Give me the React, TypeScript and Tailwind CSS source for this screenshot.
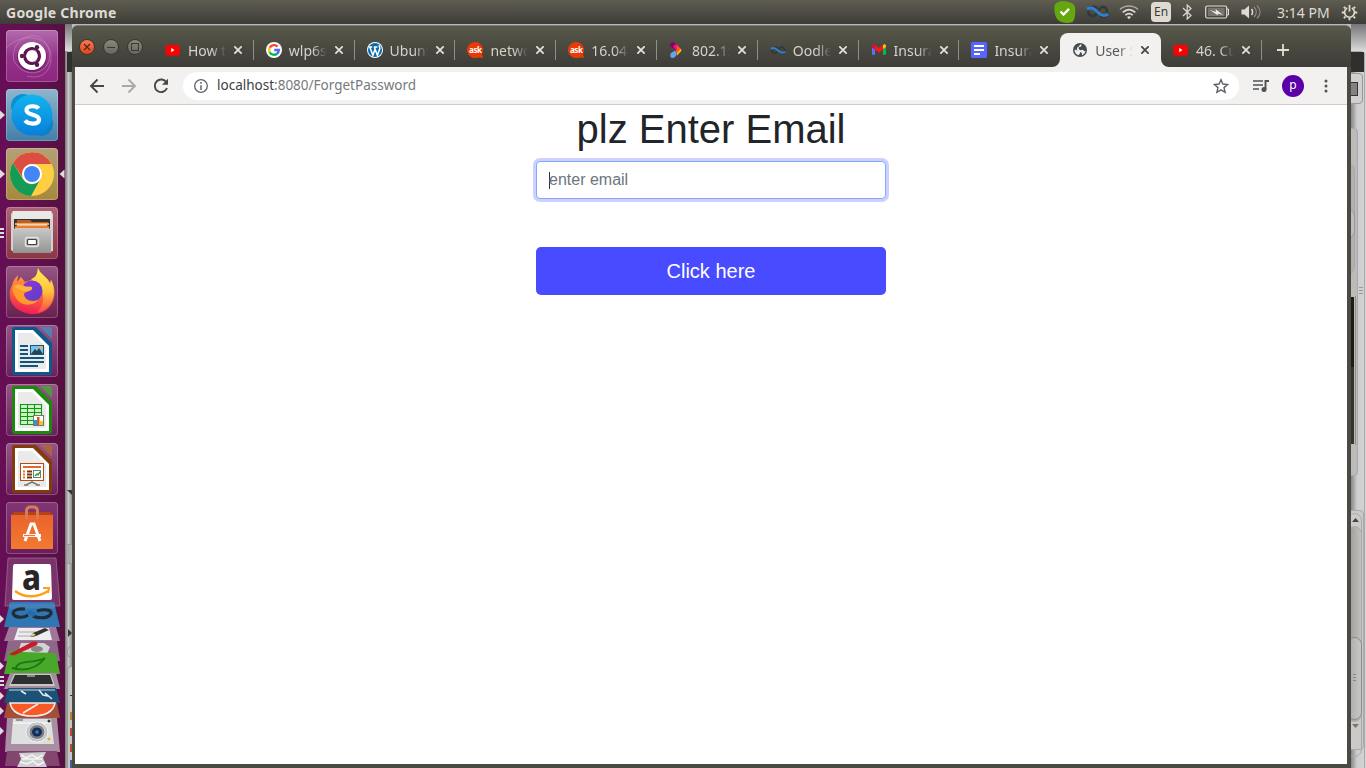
import React from "react";

type TabInfo = { title: string; icon: React.ReactNode; active?: boolean; divider?: boolean };

const YouTube = () => (
  <svg viewBox="0 0 16 16" className="size-4">
    <rect x="0.500" y="3" width="14.200" height="10.400" rx="2" fill="#f00" />
    <path d="M6.200 6v4.200l3.400-2.100z" fill="#fff" />
  </svg>
);
const Google = () => (
  <svg viewBox="0 0 16 16" className="size-4">
    <circle cx="8" cy="8" r="8" fill="#fff" />
    <g fill="none" strokeWidth="2.4">
      <path d="M11.6 4.6A4.9 4.9 0 0 0 3.7 5.8" stroke="#ff4131" />
      <path d="M3.7 5.7a4.9 4.9 0 0 0 0 4.6" stroke="#ffc107" />
      <path d="M3.7 10.2a4.9 4.9 0 0 0 7.4 1.5" stroke="#00c040" />
      <path d="M11 11.7A4.9 4.9 0 0 0 12.9 8H8.2" stroke="#5468ff" />
    </g>
  </svg>
);
const WordPress = () => (
  <svg viewBox="0 0 16 16" className="size-4">
    <circle cx="8" cy="8" r="8" fill="#fff" />
    <circle cx="8" cy="8" r="7" fill="#0a6bab" />
    <path d="M1.8 5h3.4M6.8 5h3.6M2.9 5.3l3 8 2.3-6.6M7.4 5.3l3 8 2.3-6.2c.5-1.6-.6-2.3-.5-3.9" fill="none" stroke="#fff" strokeWidth="1.5" />
  </svg>
);
const Ask = () => (
  <span className="relative flex size-4 items-center justify-center">
    <svg viewBox="0 0 16 16" className="absolute inset-0 size-4">
      <path d="M8 0a8 8 0 1 0 3 15.4l5 .6-1-4.2A8 8 0 0 0 8 0z" fill="#e93a05" />
    </svg>
    <span className="relative text-[8px] leading-none font-bold tracking-[-0.4px] text-white">ask</span>
  </span>
);
const Chevron = () => (
  <svg viewBox="0 0 16 16" className="size-4">
    <path d="M1.500 1.500C3-.5 5 .2 6 1.500l2.500 3.700L6.500 8 5 6.800 1.800 4.500c-.7-1-.8-2-.3-3z" fill="#870067" />
    <path d="M4 4l4-2 2 3 .5 3L8 9.500z" fill="#f51673" />
    <path d="M8 3.500l3.700 3.300c.8.800.8 1.800 0 2.700L8.500 12 6.500 9l1.500-1z" fill="#ff5a22" />
    <path d="M8 11l4-4.300c.5 1 .4 1.800-.3 2.800L8 13.500z" fill="#ffc400" />
    <path d="M2 11l4-2.500L8 12c-1 2-2.500 4-4.500 4-1.700 0-2.500-1.500-2.200-3 .1-1 .3-1.500.7-2z" fill="#68a0f2" />
  </svg>
);
const Oodles = ({ big = false }: { big?: boolean }) => (
  <svg viewBox="0 0 24 14" className={big ? "h-3.5 w-[23px]" : "h-[9px] w-4"} preserveAspectRatio="none">
    <path d="M2 5c0 6 5 7 8 5l4-6c3-4 8-2 8 3s-4 6-7 4M3 4c3-3 7-2 9-1" fill="none" stroke="#34383b" strokeWidth="2.600" />
    <path d="M1 4c5-2 7-1 11 3s7 4.500 11 2" fill="none" stroke="#2f80d0" strokeWidth="3" />
  </svg>
);
const Gmail = () => (
  <svg viewBox="0 0 16 16" className="size-4">
    <path d="M1 4v8.700h3V6z" fill="#5573ff" />
    <path d="M12 6v6.700h3V4z" fill="#00bd45" />
    <path d="M1 3.500c0-1.400 1.600-1.600 2.300-1L8 6l4.700-3.500L13 7 8 10.500 1 5.500z" fill="#ff1320" />
    <path d="M12 3l.7-.6c1-.6 2.300 0 2.300 1.300V5l-3 2z" fill="#ffc107" />
    <path d="M1 3.500c0-.9.500-1.300 1-1.400l2 1.700V7.500L1 5.300z" fill="#c5162e" />
  </svg>
);
const Docs = () => (
  <svg viewBox="0 0 16 16" className="size-4">
    <rect width="16" height="16" rx="1.500" fill="#5765ff" />
    <path d="M3 4h10M3 8h10M3 12h6" stroke="#fff" strokeWidth="1.800" />
  </svg>
);
const Globe = () => (
  <svg viewBox="0 0 16 16" className="size-4">
    <circle cx="8" cy="8" r="7" fill="#45494d" />
    <path d="M2.700 7.500l3.400 1.300 2 1v1.500l-1 1v1C4 12.800 2.300 10 2.700 7.500zM8 2.600h1.500l-.3 2-2.500.7v1.500L8 8.200l3-.5 1.200 1.500 1.300-.5c-.2 2-1.700 3.800-3.400 4.500l-.4-2.500-2-.9-3-2L5.500 5 7 4.500z" fill="#f2f1f0" />
  </svg>
);

const tabs: TabInfo[] = [
  { title: "How t", icon: <YouTube />, divider: true },
  { title: "wlp6s0", icon: <Google />, divider: true },
  { title: "Ubunt", icon: <WordPress />, divider: true },
  { title: "netwo", icon: <Ask />, divider: true },
  { title: "16.04", icon: <Ask />, divider: true },
  { title: "802.1x", icon: <Chevron />, divider: true },
  { title: "Oodles", icon: <Oodles />, divider: true },
  { title: "Insura", icon: <Gmail />, divider: true },
  { title: "Insura", icon: <Docs /> },
  { title: "User S", icon: <Globe />, active: true },
  { title: "46. Cu", icon: <YouTube />, divider: true },
];

function Tab({ title, icon, active, divider }: TabInfo) {
  return (
    <div
      className={
        "relative mt-2 flex h-[34px] w-[100.800px] shrink-0 items-center pl-3 " +
        (active ? "rounded-t-lg bg-[#f2f1f0] text-[#55585b]" : "text-[#d5d3ca]")
      }
    >
      {active && (
        <>
          <svg viewBox="0 0 8 8" className="absolute bottom-0 -left-2 size-2"><path d="M8 0v8H0a8 8 0 0 0 8-8z" fill="#f2f1f0" /></svg>
          <svg viewBox="0 0 8 8" className="absolute -right-2 bottom-0 size-2"><path d="M0 0v8h8a8 8 0 0 1-8-8z" fill="#f2f1f0" /></svg>
        </>
      )}
      {icon}
      <span className="ml-[7px] w-[38px] overflow-hidden text-[14px] whitespace-nowrap [mask-image:linear-gradient(90deg,#000_62%,transparent)]">
        {title}
      </span>
      <svg viewBox="0 0 8 8" className="ml-2 size-2">
        <path d="M.3.3l7.400 7.400M7.700.3L.3 7.700" stroke={active ? "#45484b" : "#e2e0d8"} strokeWidth="1.800" />
      </svg>
      {divider && <span className="absolute top-[7px] right-0 h-5 w-px bg-[#908f88]" />}
    </div>
  );
}

function TopBar() {
  return (
    <header className="flex h-6 shrink-0 items-center bg-linear-to-b from-[#5f5d51] to-[#3d3c38] pl-1.5 text-[#dfdbd2]">
      <span className="text-[14px] font-bold tracking-[0.240px]">Google Chrome</span>
      <div className="ml-auto flex h-6 items-center">
        <svg viewBox="0 0 22 22" className="h-[22px] w-[22px]">
          <path d="M5 .7C8-.3 20 0 21 6c.5 3 .5 12-2 14.500S7 22 4 19 .3 10 .3 7 1.500 1.500 5 .7z" fill="#65a70e" />
          <path d="M6.500 10.500l3 3 5.500-5.600" fill="none" stroke="#fff" strokeWidth="2.300" />
        </svg>
        <span className="ml-2.5 flex"><Oodles big /></span>
        <svg viewBox="0 0 20 16" className="ml-[10px] h-4 w-5" fill="none" strokeWidth="1.600">
          <path d="M1 5.500c5-4.600 13-4.600 18 0" stroke="#aaa79f" /><path d="M3.700 8.400c4-3.500 8.600-3.500 12.600 0" stroke="#dfdbd2" />
          <path d="M6.300 11.200c2.500-2 5-2 7.400 0" stroke="#dfdbd2" /><path d="M8 13l2 2.200 2-2.200c-1-1-3-1-4 0z" fill="#dfdbd2" />
        </svg>
        <span className="ml-3 flex h-5 w-5 items-center justify-center rounded-sm bg-[#dfdbd2] text-[12px] text-[#3c3b37]">En</span>
        <svg viewBox="0 0 10 16" className="ml-[11px] h-4 w-[10px]"><path d="M1 4l8 7.500L5.200 15V1L9 4.500 1 12" fill="none" stroke="#dfdbd2" strokeWidth="1.200" /></svg>
        <svg viewBox="0 0 25 14" className="ml-[13px] h-[14px] w-[25px]">
          <rect x=".7" y="1" width="21" height="12" rx="1.500" fill="none" stroke="#dfdbd2" strokeWidth="1.200" />
          <rect x="3" y="3" width="16.500" height="8" fill="#76746c" />
          <path d="M22 4h1.500v6H22" fill="none" stroke="#dfdbd2" />
          <path d="M5 5l6 2-.5-3L18 10l-5.500-1.500.5 2z" fill="#efede7" />
        </svg>
        <svg viewBox="0 0 20 16" className="ml-[11px] h-4 w-5">
          <path d="M.5 5.500h3l4.500-4v13l-4.500-4h-3z" fill="#dfdbd2" />
          <path d="M10.500 5c1.500 2 1.500 4 0 6" fill="none" stroke="#dfdbd2" strokeWidth="1.500" />
          <path d="M13 3c3 3 3 7 0 10M16 1.500c4 4 4 9 0 13" fill="none" stroke="#8a8880" strokeWidth="1.400" />
        </svg>
        <span className="ml-4 w-[54px] text-[14px] whitespace-nowrap">3:14 PM</span>
        <svg viewBox="0 0 18 18" className="mr-2 ml-[10px] size-[17px]" fill="none" stroke="#dfdbd2">
          <path d="M6.500 4.300a5.200 5.200 0 1 0 5 0" strokeWidth="1.700" />
          <path d="M9 1v7" strokeWidth="1.800" />
          <path d="M3 3l1.700 1.700M15 3l-1.700 1.700M.8 9h2.500M14.700 9h2.500M3 15l1.700-1.700M15 15l-1.700-1.700M9 14.700v2.500" strokeWidth="2" />
        </svg>
      </div>
    </header>
  );
}

const UbuntuIcon = () => (
  <>
    <g fill="none" stroke="#d39aca" strokeOpacity=".45" strokeWidth="1">
      <path d="M8 31C4 14 20 4 30 6s18 18 11 29-25 11-33-4zM0 18C18 0 44 8 45 25S35 50 21 46" />
    </g>
    <circle cx="26" cy="27" r="15" fill="#4a0c40" opacity=".4" />
    <circle cx="26" cy="26" r="14" fill="#fff" />
    <circle cx="26" cy="26" r="7.500" fill="none" stroke="#5e1650" strokeWidth="3.200" />
    <path d="M20 26h-5M29 20.800l2.500-4.300M29 31.200l2.500 4.300" stroke="#fff" strokeWidth="6" />
    <g fill="#5e1650"><circle cx="16" cy="26" r="2.200" /><circle cx="31" cy="17.300" r="2.200" /><circle cx="31" cy="34.700" r="2.200" /></g>
    <circle cx="26" cy="26" r="7.500" fill="none" stroke="#5e1650" strokeWidth="2.600" strokeDasharray="10.700 5" strokeDashoffset="-2.500" />
  </>
);
const SkypeIcon = () => (
  <>
    <circle cx="17" cy="17" r="12" fill="#0b91ce" /><circle cx="35" cy="35" r="12" fill="#0b82c8" />
    <circle cx="26" cy="26" r="20.500" fill="url(#skype)" />
    <path d="M32.500 19.500c-2-3-12-3.500-12 1.700 0 5.800 12.500 3.200 12.500 9.300 0 5.400-10.500 5.200-14 1" fill="none" stroke="#fff" strokeWidth="4.200" />
  </>
);
const ChromeIcon = () => (
  <>
    <circle cx="26" cy="26" r="22" fill="#ffce42" />
    <path d="M7 15a22 22 0 0 1 38.500 1H26a10 10 0 0 0-9 14z" fill="#dc4e42" />
    <path d="M7 15a22 22 0 0 0 18 33l9.500-17a10 10 0 0 1-17.500 0z" fill="#159b58" />
    <circle cx="26" cy="26" r="10" fill="#fff" /><circle cx="26" cy="26" r="8" fill="#4385f4" />
  </>
);
const FilesIcon = () => (
  <>
    <path d="M7 4h38l2 3v37l-3 1V12H8v33l-3-2V7z" fill="#d2d2d0" />
    <path d="M7 4h38l1 8H6z" fill="#e8e8e6" />
    <path d="M8 12h36v12H8z" fill="#37322e" />
    <path d="M11 13h13l2 2h16v8H10z" fill="#b4612a" />
    <path d="M9 16h34v2H9z" fill="#f4a35b" /><path d="M9 19h34v3H9z" fill="#f07a2c" /><path d="M11 18h30" stroke="#fff1dd" strokeWidth="1.200" />
    <path d="M7 22l3-1h32l3 1v24H7z" fill="url(#metal)" />
    <rect x="19.500" y="30.500" width="13" height="9" rx="2" fill="#aaa" stroke="#e2e2e2" strokeWidth="1.500" />
    <rect x="21.500" y="32.500" width="9" height="5" rx="1" fill="#fff" stroke="#444" strokeWidth="1.200" />
  </>
);
const FirefoxIcon = () => (
  <>
    <path d="M12 9l-1 7 4-5 4 5c6-2 9-3 12-6 1-3 0-5 1-8 2 6 10 9 12 16l1-4c4 7 5 16 1 23-5 10-18 14-29 9C4 41 1 29 6 19c1-4 3-7 6-10z" fill="url(#fox)" />
    <path d="M32 2c2 8 11 9 12 16l1-4c4 8 4 18-1 25-3 4-8 7-13 8 8-9 8-20 1-28l-7-6c4-1 7-5 7-11z" fill="url(#flame)" />
    <circle cx="26" cy="25" r="10.500" fill="url(#orb)" />
    <path d="M7 20c4-2 6-2 11 0 4 2 9-1 8 3-2 3-8 2-8 6 2 6 8 7 14 5-4 6-17 7-22-2-3-4-4-8-3-12z" fill="#ff9b2c" />
    <path d="M8 20c4-2 6-2 10 0 4 2 9-1 8 3-4 4-12 2-18-3z" fill="#ffb43e" />
  </>
);
function DocShape({ color, corner, kind }: { color: string; corner: string; kind: string }) {
  return (
    <>
      <path d="M6 4q0-2 2-2h22l16 16v29q0 3-3 3H9q-3 0-3-3z" fill={color} />
      <path d="M34 2h10q2 0 2 2v10z" fill={corner} opacity=".75" />
      <path d="M9 5h18l16 16v26H9z" fill="#fff" /><path d="M12 8h14l14 14v22H12z" fill="#e2e1e1" opacity=".7" />
      {kind === "writer" && <>
        <path d="M14 21h8M14 25h8M14 29h8M14 33h24M14 37h24M14 41h18" stroke="#12567e" strokeWidth="2" />
        <rect x="24.500" y="20.500" width="13" height="9" fill="#75c3ee" stroke="#12567e" /><path d="M25 29l4-5 2 2 2-3 4 6z" fill="#244355" /><circle cx="35" cy="22.500" r="1.600" fill="#f4b63c" />
      </>}
      {kind === "calc" && <>
        <rect x="14" y="20" width="22" height="20" fill="#c9f4c4" />
        <path d="M14 20.500h22M14 24.500h22M14 28.500h22M14 32.500h22M14 36.500h22M14 40.500h22M14.500 20v21M21.500 20v21M28.500 20v21M35.500 20v21" stroke="#159414" strokeWidth="1.100" />
        <rect x="27.500" y="31.500" width="10" height="10" fill="#fff" stroke="#777" /><path d="M28 36h3v5h-3z" fill="#1c9ce4" /><path d="M31 33h2.500v8H31z" fill="#d65c16" /><path d="M34 37h3v4h-3z" fill="#f6c325" />
      </>}
      {kind === "impress" && <>
        <rect x="14.500" y="20.500" width="23" height="17" fill="#fff" stroke="#b54a15" />
        <path d="M17 24h18" stroke="#dc6b31" strokeWidth="2" /><path d="M17 28.500h2M17 31.500h2M17 34.500h2" stroke="#e7732b" strokeWidth="2" /><path d="M21 28.500h5M21 31.500h5M21 34.500h5" stroke="#78310e" strokeWidth="2" />
        <rect x="27.500" y="27.500" width="7" height="7" fill="#fff" stroke="#777" /><path d="M29 33l2-2 1 1 2-3" fill="none" stroke="#24a424" strokeWidth="1.400" />
        <path d="M26 38v2M20 42l6-3 6 3M18 42h4M30 42h4" fill="none" stroke="#777" strokeWidth="1.500" />
      </>}
    </>
  );
}
const SoftwareIcon = () => (
  <>
    <path d="M5 13l3-3h36l3 3z" fill="#b64316" /><path d="M5 13h42v34H5z" fill="url(#bag)" />
    <path d="M20.500 17V9q0-4 4-4h3q4 0 4 4v8" fill="none" stroke="#d97956" strokeWidth="3" />
    <path d="M19 39l6-17h3l6 17M17 33.500h18" fill="none" stroke="#fff" strokeWidth="3" />
    <path d="M18 33.500h11" stroke="#f27532" strokeWidth="1.200" />
  </>
);

const launcher: { icon: React.ReactNode; bg: string; left?: string; right?: boolean }[] = [
  { icon: <UbuntuIcon />, bg: "bg-linear-to-b from-[#b36bad] via-[#94348a] to-[#8d2580]" },
  { icon: <SkypeIcon />, bg: "bg-linear-to-b from-[#8fb5cd] to-[#427fa8]", left: "arrow" },
  { icon: <ChromeIcon />, bg: "bg-linear-to-b from-[#b4a078] to-[#a6893a]", left: "arrow", right: true },
  { icon: <FilesIcon />, bg: "bg-linear-to-b from-[#ad6376] to-[#8c3444]", left: "bars" },
  { icon: <FirefoxIcon />, bg: "bg-linear-to-b from-[#965584] to-[#68214f]" },
  { icon: <DocShape color="#0e598b" corner="#3f92bf" kind="writer" />, bg: "bg-linear-to-b from-[#965584] to-[#6b1d5c]" },
  { icon: <DocShape color="#1b890c" corner="#3fae2f" kind="calc" />, bg: "bg-linear-to-b from-[#965584] to-[#6b1d5c]" },
  { icon: <DocShape color="#843b0c" corner="#b76a35" kind="impress" />, bg: "bg-linear-to-b from-[#965584] to-[#6b1d5c]" },
  { icon: <SoftwareIcon />, bg: "bg-linear-to-b from-[#823673] to-[#6b1d5c]" },
];

function FoldedStack() {
  return (
    <svg viewBox="0 555 65 213" className="block h-[213px] w-[65px] shrink-0">
      <path d="M8 558h48l4 48H5z" fill="#793369" stroke="#a273a0" strokeWidth=".7" />
      <path d="M15 564h34q2 0 2 3l1 31q0 2-2 2H14q-2 0-2-2l1-31q0-3 2-3z" fill="#fff" />
      <text x="22" y="590" fontFamily="Noto Sans" fontWeight="800" fontSize="35" textLength="19" lengthAdjust="spacingAndGlyphs" fill="#292526">a</text>
      <path d="M15 591c9 7 23 7 33 0" fill="none" stroke="#ff9f18" strokeWidth="2.400" /><path d="M43 588h6l-1 5" fill="none" stroke="#ff9f18" strokeWidth="2" />
      <path d="M10 602h44l6 25H4z" fill="#2f76b5" /><path d="M9 606h46" stroke="#6799c2" strokeWidth="5" opacity=".35" />
      <path d="M25 609c-9-1-14 3-11 6s10 3 14 0M33 616c4 2 13 3 17-1s-3-7-13-4" fill="none" stroke="#202c38" strokeWidth="3.200" />
      <path d="M28 612l7 3" stroke="#246aac" strokeWidth="4" />
      <path d="M9 627h47l4 14H4z" fill="#9d7698" /><path d="M18 628h31l3 12H14z" fill="#ededed" /><path d="M19 632h17M18 636h17" stroke="#aaa" />
      <path d="M30 637l3-4 12-5 4 2-13 6z" fill="#333" /><path d="M30 637l3-4 3 2z" fill="#edce73" />
      <path d="M8 641h49l3 20H4z" fill="#8f668a" /><path d="M21 643h23l6 4-3 7-12 4-18-3z" fill="#d3d3d3" /><ellipse cx="37" cy="649" rx="6" ry="3" fill="#888" />
      <path d="M9 652l10-4 3 4 34 1 4 21H4z" fill="#49a829" /><path d="M12 668c15 4 26-1 33-10-10 6-27 1-29 10" fill="none" stroke="#187915" strokeWidth="2" />
      <path d="M11 653l21-11c5-2 8 2 3 4l-20 9c-4 1-7-1-4-2z" fill="#c51c29" />
      <path d="M10 673h46l4 16H4z" fill="#a18d9c" /><path d="M14 674h37l4 12H9z" fill="#cac6c3" /><path d="M15 675h35l3 9H11z" fill="#2d302e" /><path d="M27 676h8" stroke="#ddd" />
      <path d="M8 688h48l4 15H4z" fill="#1c5278" /><path d="M9 690h46" stroke="#7692a5" strokeWidth="2" /><path d="M21 691l5 3M39 690l4 5 5 1-3-3 7 6" fill="none" stroke="#e1ebf1" strokeWidth="1.500" />
      <path d="M7 703h50l3 15H4z" fill="#a54e36" /><path d="M10 703c2 10 11 13 22 13s21-3 23-13z" fill="#f95827" stroke="#eee" strokeWidth="1.500" /><path d="M23 713l15-9" stroke="#eee" strokeWidth="1.600" />
      <path d="M7 718h50l3 34H5z" fill="#a98ea3" /><path d="M13 719h38l3 25H11z" fill="#dedfdf" /><path d="M13 723h38" stroke="#fff" /><path d="M16 720h7" stroke="#555" />
      <ellipse cx="37" cy="732" rx="11" ry="10" fill="#bfc2c6" stroke="#f2f2f2" /><ellipse cx="37" cy="732" rx="8" ry="7.500" fill="#787e85" stroke="#ddd" /><ellipse cx="37" cy="732" rx="5" ry="4.500" fill="#172d53" /><circle cx="37" cy="732" r="1.800" fill="#3a7abb" /><circle cx="49" cy="739" r="1.500" fill="#eba834" /><circle cx="49" cy="721" r="1.500" fill="#333" />
      <path d="M7 751h50l3 15H5z" fill="#83476f" /><path d="M19 753l27-1-3 6 4 9H17l4-8z" fill="#cfd0d0" /><path d="M21 755l5 3 6-3 5 3 6-3M20 762l7 2 6-3 5 4 6-3M22 759h20" fill="none" stroke="#f5f5f5" strokeWidth="1.500" />
      <g fill="#ddd"><path d="M0 615l4 4-4 4zM0 662l4 4-4 4zM0 692l4 4-4 4zM0 707l4 4-4 4zM0 727l4 4-4 4z" /><path d="M0 676h4v2H0zM0 680h4v2H0zM0 684h4v2H0z" /></g>
    </svg>
  );
}

function Launcher() {
  return (
    <nav className="flex w-[65px] shrink-0 flex-col bg-linear-to-r from-[#650e55] via-[#63104f] to-[#54103f] pt-1.5">
      {launcher.map((item, i) => (
        <div key={i} className="flex h-[59px] shrink-0">
          <span className="flex h-[52px] w-1.5 items-center">
            {item.left && (
              <svg viewBox="0 0 6 12" className="h-3 w-1.5">
                {item.left === "arrow" ? <path d="M0 1.500l5 4.500-5 4.500z" fill="#ddd" /> : <path d="M0 2h4M0 6h4M0 10h4" stroke="#ddd" strokeWidth="2" />}
              </svg>
            )}
          </span>
          <span className={"size-[52px] rounded-[4px] shadow-[inset_0_0_0_1px_#ffffff38] " + item.bg}>
            <svg viewBox="0 0 52 52" className="size-[52px]">{item.icon}</svg>
          </span>
          {item.right && <svg viewBox="0 0 6 12" className="mt-5 ml-px h-3 w-1.5"><path d="M5.500 1.500L.5 6l5 4.500z" fill="#ddd" /></svg>}
        </div>
      ))}
      <div className="-mt-1.5 flex"><FoldedStack /></div>
    </nav>
  );
}

function LeftSliver() {
  return (
    <div className="flex w-[7px] shrink-0 flex-col bg-linear-to-r from-[#777] via-[#c9c9c9] to-[#8e8e8e]">
      <div className="h-[27px] bg-linear-to-b from-[#777] to-[#dedede]" />
      <div className="mt-px ml-0.5 h-5 bg-[#30302c]" />
      <svg viewBox="0 0 7 8" className="mt-[416px] h-2 w-[7px]"><path d="M2 2h5v5z" fill="#333" /></svg>
      <div className="mt-12 ml-0.5 h-5 border-y border-[#999] bg-[#aaa]" />
      <svg viewBox="0 0 7 10" className="mt-16 h-2.5 w-[7px]"><path d="M3 1l4 4-4 4z" fill="#333" /></svg>
      <div className="mt-2 ml-0.5 h-3 rounded-l-full border border-[#999]" />
      <div className="mt-2 ml-0.5 grow rounded-tl border-t border-l border-[#999] bg-[#c5c5c5] pt-7">
        <div className="ml-0.5 h-px bg-[#333]" />
        <div className="mt-4 ml-0.5 h-2 w-0.5 bg-[#b98031]" />
        <div className="mt-2 ml-0.5 h-2 w-0.5 bg-[#b84b31]" />
        <div className="mt-2 ml-0.5 h-2 w-0.5 bg-[#b65024]" />
        <div className="mt-2 ml-0.5 h-2 w-0.5 bg-[#405f9a]" />
      </div>
    </div>
  );
}

function RightSliver() {
  return (
    <div className="relative w-[15px] shrink-0 overflow-hidden bg-linear-to-r from-[#888] via-[#cecece] via-40% to-[#d4d4d4]">
      <div className="absolute inset-x-0 top-0 h-7 bg-linear-to-b from-[#77777a] to-[#dedede]" />
      <div className="absolute top-[27px] -left-2 h-[730px] w-[22px] rounded-tr border border-[#aaa]" />
      <div className="absolute top-7 left-0 h-5 w-[13px] bg-[#302f2c]" />
      <div className="absolute top-[49px] -left-3 h-[31px] w-6 rounded border border-[#999] bg-[#d1d0cf]" />
      <div className="absolute top-[58px] -left-2 h-[14px] w-[15px] border border-[#333] bg-[#828282]" />
      <div className="absolute top-[104px] -left-4 h-[348px] w-[23px] rounded border border-[#aaa] bg-[#bcbbb9]" />
      <div className="absolute top-[137px] -left-4 h-[115px] w-5 rounded-xl border border-[#aaa] bg-[#b3b1af]" />
      <div className="absolute top-[184px] -left-4 h-[31px] w-5 rounded-lg border border-[#999] bg-[#bebdbb]" />
      <div className="absolute top-[263px] left-2 h-[7px] w-1 border-y border-[#999]" /><div className="absolute top-[266px] left-2 h-px w-1 bg-[#999]" />
      <div className="absolute top-[273px] left-0 h-[70px] w-[3px] bg-[#1b1b1a]" /><div className="absolute top-[343px] left-0 h-[77px] w-[3px] bg-[#333230]" />
      <div className="absolute top-[272px] left-[3px] h-[149px] w-0.5 border-r border-[#918b84]" />
      <div className="absolute top-[486px] -left-2 h-[240px] w-[21px] rounded border border-[#aaa] bg-[#cbcac9]" />
      <div className="absolute top-[489px] -left-1 h-[244px] w-[15px] rounded-lg border border-[#aaa]" />
      <div className="absolute top-[502px] -left-1 h-[196px] w-[15px] rounded-lg border border-[#aaa] bg-linear-to-r from-[#999] to-[#c1c0be]" />
      <div className="absolute top-[613px] -left-1 h-[83px] w-[15px] rounded-lg border border-[#8d8b89] bg-linear-to-r from-[#aaa] to-[#c8c7c6]" />
      <svg viewBox="0 0 8 4" className="absolute top-[494px] left-px h-1 w-2"><path d="M0 4h7L3.500 0z" fill="#444" /></svg>
      <div className="absolute top-[650px] left-0.5 h-[7px] w-[3px] border-y border-[#888]" /><div className="absolute top-[653px] left-0.5 h-px w-[3px] bg-[#888]" />
      <svg viewBox="0 0 8 4" className="absolute top-[700px] left-px h-1 w-2"><path d="M0 0h7L3.500 4z" fill="#777" /></svg>
    </div>
  );
}

function ChromeWindow() {
  return (
    <main className="mt-px flex w-[1279px] shrink-0 flex-col rounded-t-md border-t border-[#7c7a76] bg-[#4b4b42]">
      <div className="flex h-[41px] shrink-0 rounded-t-md bg-linear-to-b from-[#58584b] to-[#3d3c37] pl-[7px]">
        <div className="flex w-[74px] gap-2 pt-[13px]">
          <span className="flex size-4 items-center justify-center rounded-full border border-[#393831] bg-linear-to-b from-[#f87851] to-[#df4615]"><svg viewBox="0 0 8 8" className="size-2"><path d="M1 1l6 6M7 1L1 7" stroke="#512514" strokeWidth="1.200" /></svg></span>
          <span className="flex size-4 items-center justify-center rounded-full border border-[#393831] bg-linear-to-b from-[#8a897f] to-[#68675f]"><span className="h-px w-2 bg-[#393831]" /></span>
          <span className="flex size-4 items-center justify-center rounded-full border border-[#393831] bg-linear-to-b from-[#8a897f] to-[#68675f]"><span className="size-2 border border-[#393831]" /></span>
        </div>
        <div className="-mt-px flex">{tabs.map((tab, i) => <Tab key={i} {...tab} />)}</div>
        <svg viewBox="0 0 12 12" className="mt-[18px] ml-[15px] size-3"><path d="M6 0v12M0 6h12" stroke="#e1dfd2" strokeWidth="1.800" /></svg>
      </div>
      <div className="mr-1 mb-1 ml-[3px] flex min-h-0 grow flex-col bg-white">
        <div className="flex h-[38px] shrink-0 items-center border-b border-[#cecdca] bg-[#f2f1f0] pl-3.5">
          <svg viewBox="0 0 16 16" className="size-4" fill="none" stroke="#454749" strokeWidth="1.900"><path d="M15 8H2M8.500 1.500L2 8l6.500 6.500" /></svg>
          <svg viewBox="0 0 16 16" className="ml-4 size-4" fill="none" stroke="#aaa9a8" strokeWidth="1.900"><path d="M1 8h13M7.500 1.500L14 8l-6.500 6.500" /></svg>
          <svg viewBox="0 0 16 16" className="ml-4 size-4" fill="none" stroke="#454749" strokeWidth="1.900"><path d="M13.500 4.500A6.300 6.300 0 1 0 14 10" /><path d="M15 .8v6H9z" fill="#454749" stroke="none" /></svg>
          <div className="ml-3.5 flex h-7 w-[1056px] items-center rounded-full bg-white pl-[11px]">
            <svg viewBox="0 0 14 14" className="size-3.5"><circle cx="7" cy="7" r="6.300" fill="none" stroke="#5f6368" strokeWidth="1.300" /><path d="M7 3v1.700M7 6.200v4.800" stroke="#5f6368" strokeWidth="1.500" /></svg>
            <span className="ml-[9px] text-[13.500px] whitespace-nowrap text-[#77797d]"><span className="text-[#3e4144]">localhost</span>:8080/ForgetPassword</span>
            <svg viewBox="0 0 24 24" className="mr-[10px] ml-auto size-4" fill="none" stroke="#5f6368" strokeWidth="2.100"><path d="M12 2.500l2.800 6.600 7.200.6-5.500 4.700 1.700 7.100-6.200-3.800-6.200 3.800 1.700-7.100L2 9.700l7.200-.6z" /></svg>
          </div>
          <svg viewBox="0 0 16 14" className="ml-3.5 h-3.5 w-4"><path d="M0 2h10M0 6h10M0 10h6" stroke="#505254" strokeWidth="1.700" /><path d="M12.500 10V2H16" fill="none" stroke="#505254" strokeWidth="1.900" /><circle cx="11" cy="10.500" r="2.500" fill="#505254" /></svg>
          <span className="ml-[13px] flex size-[22px] items-center justify-center rounded-full bg-[#5b00a7] pb-0.5 text-[12px] text-white">p</span>
          <svg viewBox="0 0 4 14" className="ml-5 h-3.5 w-1" fill="#505254"><circle cx="2" cy="2" r="1.500" /><circle cx="2" cy="7" r="1.500" /><circle cx="2" cy="12" r="1.500" /></svg>
        </div>
        <form className="mx-auto flex w-[350px] flex-col font-['Liberation_Sans',sans-serif]">
          <h1 className="text-center text-[40px] leading-12 font-normal text-[#212529]">plz Enter Email</h1>
          <div className="mt-2 flex h-[38px] items-center rounded border border-[#80aaff] bg-white pl-3 text-base text-[#6c757d] shadow-[0_0_0_3px_#d0d0ff]">
            <span className="h-[17px] w-px bg-[#333]" /><span className="-ml-px">enter email</span>
          </div>
          <button type="button" className="mt-12 h-12 rounded-[5px] bg-[#484bff] text-xl text-white">Click here</button>
        </form>
      </div>
    </main>
  );
}

export default function App() {
  return (
    <div className="flex h-[768px] w-[1366px] flex-col overflow-hidden bg-[#bbb] font-['Noto_Sans',sans-serif]">
      <svg className="absolute size-0" aria-hidden="true">
        <defs>
          <linearGradient id="skype" x1="0" y1="0" x2="0" y2="1"><stop stopColor="#12b5ef" /><stop offset="1" stopColor="#087fda" /></linearGradient>
          <linearGradient id="metal" x1="0" y1="0" x2="0" y2="1"><stop stopColor="#c7c8c7" /><stop offset="1" stopColor="#929492" /></linearGradient>
          <linearGradient id="fox" x1=".6" y1="0" x2=".4" y2="1"><stop stopColor="#ffc145" /><stop offset=".5" stopColor="#ff7139" /><stop offset="1" stopColor="#ef1a57" /></linearGradient>
          <linearGradient id="flame" x1="0" y1="0" x2="0" y2="1"><stop stopColor="#fff052" /><stop offset=".5" stopColor="#ffc53c" /><stop offset="1" stopColor="#ff4648" /></linearGradient>
          <linearGradient id="orb" x1="0" y1="0" x2="1" y2="1"><stop stopColor="#9633db" /><stop offset="1" stopColor="#5840c4" /></linearGradient>
          <linearGradient id="bag" x1="0" y1="0" x2="0" y2="1"><stop stopColor="#e9632c" /><stop offset="1" stopColor="#f37a31" /></linearGradient>
        </defs>
      </svg>
      <TopBar />
      <div className="flex h-[744px] shrink-0">
        <Launcher />
        <LeftSliver />
        <ChromeWindow />
        <RightSliver />
      </div>
    </div>
  );
}
